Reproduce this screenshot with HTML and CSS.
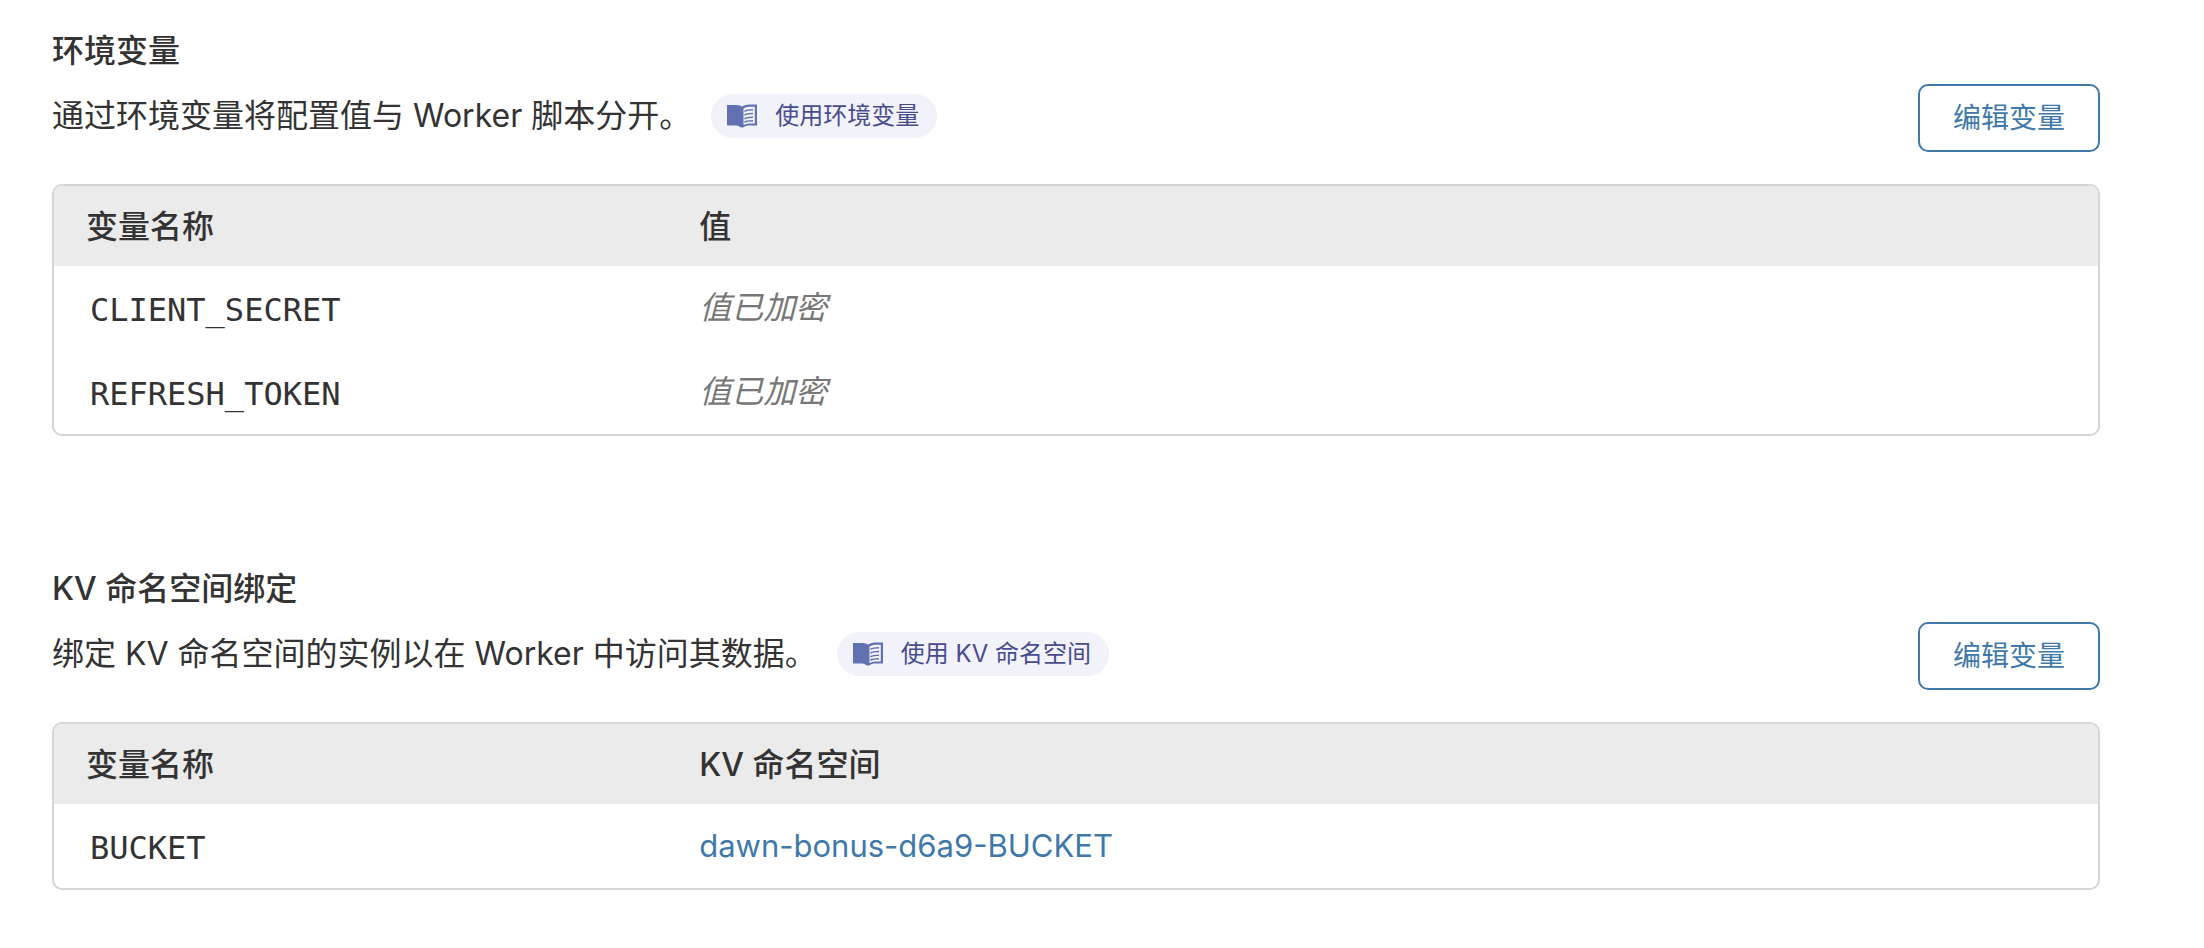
FILE: index.html
```html
<!DOCTYPE html>
<html lang="zh-CN">
<head>
<meta charset="utf-8">
<meta name="viewport" content="width=device-width, initial-scale=1">
<title>环境变量</title>
<link rel="stylesheet" href="styles.css">
</head>
<body>
<svg class="sprite" aria-hidden="true">
  <symbol id="book" viewBox="0 0 30 24">
    <path fill="currentColor" d="M0 1H10Q13 1 15 2.600Q18.500 .5 22 .5H30V21.500H21Q18.500 21.500 16.500 23.200Q15 24 13.500 23.200Q11.500 21.500 9 21.500H0Z"/>
    <path fill="#f1f2fa" d="M16.500 4.500Q19 2.800 22 2.800H27.800V19.500H22Q19 19.500 16.500 21Z"/>
    <path fill="none" stroke="currentColor" stroke-width="1.600" d="M17.500 7.300Q20 5.700 26 5.700M17.500 11Q20 9.500 26 9.500M17.500 14.700Q20 13.200 26 13.200M17.500 18.200Q20 16.800 26 16.800"/>
  </symbol>
</svg>
<main class="page">
  <section class="section">
    <header class="section-header">
      <div class="intro">
        <h2 class="title">环境变量</h2>
        <div class="summary">
          <p class="description">通过环境变量将配置值与 Worker 脚本分开。</p>
          <a class="doc-link" href="#env-docs"><svg class="book" aria-hidden="true"><use href="#book"/></svg>使用环境变量</a>
        </div>
      </div>
      <button class="edit" type="button">编辑变量</button>
    </header>
    <div class="table-frame">
      <table class="table">
        <thead><tr><th class="name" scope="col">变量名称</th><th scope="col">值</th></tr></thead>
        <tbody>
          <tr><td><code class="code">CLIENT_SECRET</code></td><td><em class="encrypted">值已加密</em></td></tr>
          <tr><td><code class="code">REFRESH_TOKEN</code></td><td><em class="encrypted">值已加密</em></td></tr>
        </tbody>
      </table>
    </div>
  </section>
  <section class="section">
    <header class="section-header">
      <div class="intro">
        <h2 class="title">KV 命名空间绑定</h2>
        <div class="summary">
          <p class="description">绑定 KV 命名空间的实例以在 Worker 中访问其数据。</p>
          <a class="doc-link" href="#kv-docs"><svg class="book" aria-hidden="true"><use href="#book"/></svg>使用 KV 命名空间</a>
        </div>
      </div>
      <button class="edit" type="button">编辑变量</button>
    </header>
    <div class="table-frame">
      <table class="table">
        <thead><tr><th class="name" scope="col">变量名称</th><th scope="col">KV 命名空间</th></tr></thead>
        <tbody>
          <tr><td><code class="code">BUCKET</code></td><td><a class="namespace" href="#namespace">dawn-bonus-d6a9-BUCKET</a></td></tr>
        </tbody>
      </table>
    </div>
  </section>
</main>
</body>
</html>
```
FILE: styles.css
```css
* { box-sizing: border-box; }

body {
  margin: 0;
  background: #fff;
  color: #333;
  font: 400 32px/48px Inter, "Noto Sans CJK SC", sans-serif;
}

.sprite { display: none; }

.page {
  display: flex;
  flex-direction: column;
  gap: 128px;
  padding: 26px 104px 56px 52px;
}

.section-header {
  display: flex;
  align-items: flex-end;
  justify-content: space-between;
  gap: 32px;
  margin-bottom: 32px;
}

.intro { padding-bottom: 12px; }

.title {
  margin: 0 0 16px;
  font-size: 32px;
  font-weight: 500;
  line-height: 50px;
}

.summary {
  display: flex;
  align-items: center;
  gap: 20px;
}

.description { margin: 0; }

.doc-link {
  display: flex;
  align-items: center;
  gap: 18px;
  height: 44px;
  padding: 0 18px 0 16px;
  border-radius: 22px;
  background: #f1f2fa;
  color: #484c8c;
  font-size: 24px;
  text-decoration: none;
  white-space: nowrap;
}

.book {
  width: 30px;
  height: 24px;
  color: #6271b1;
}

.edit {
  height: 68px;
  padding: 0 33px;
  border: 2px solid #4079a9;
  border-radius: 10px;
  background: #fff;
  color: #4079a9;
  font: inherit;
  font-size: 28px;
  white-space: nowrap;
}

.table-frame {
  overflow: hidden;
  border: 2px solid #d5d5d5;
  border-radius: 10px;
}

.table {
  width: 100%;
  border-collapse: collapse;
  table-layout: fixed;
}

.table th,
.table td {
  padding: 0 32px;
  text-align: left;
}

.table th {
  height: 80px;
  padding-top: 2px;
  background: #ebebeb;
  font-weight: 500;
}

.table td { height: 84px; }

.code {
  display: block;
  padding: 4px 0 0 4px;
  font-family: "DejaVu Sans Mono", monospace;
  font-size: 32px;
}

.name { width: 30%; }

.encrypted { color: #777; }

.namespace {
  color: #4079a9;
  font-size: 31px;
  text-decoration: none;
}
```
